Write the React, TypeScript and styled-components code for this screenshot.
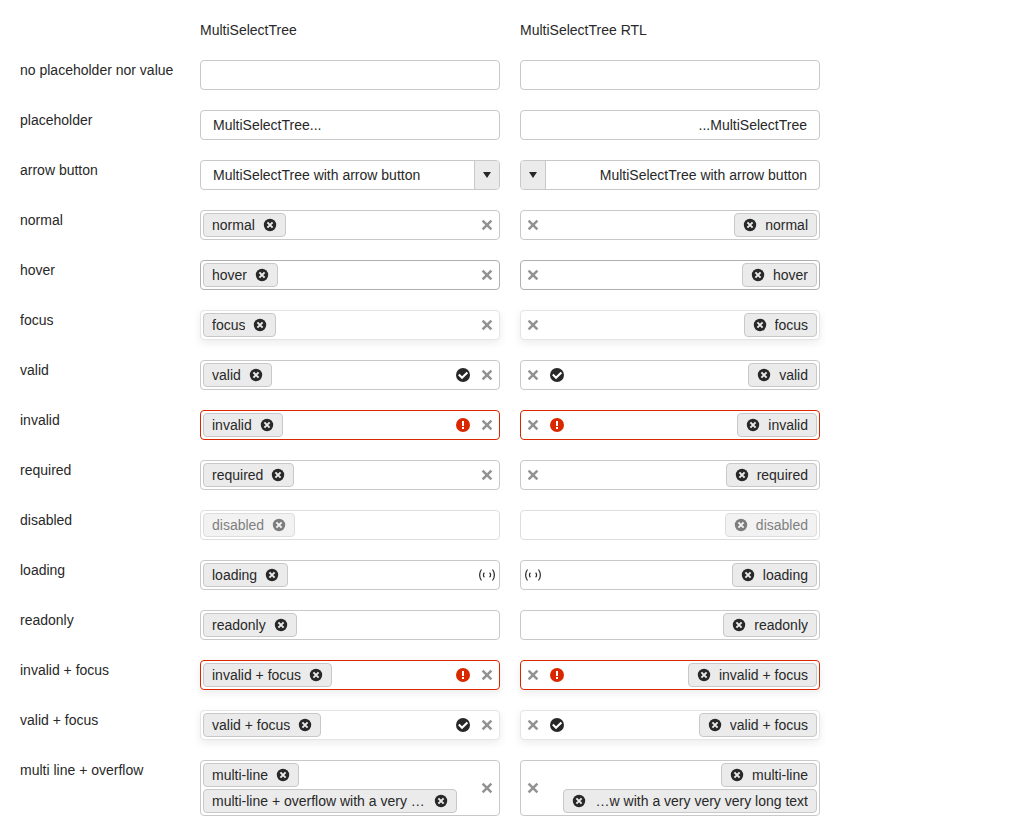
import React from "react";
import styled, { createGlobalStyle, css } from "styled-components";

const GlobalStyle = createGlobalStyle`
  *, *::before, *::after { box-sizing: border-box; }
  body {
    margin: 0;
    background: #fff;
    color: #282828;
    font-family: "Liberation Sans", Arial, Helvetica, sans-serif;
    font-size: 14px;
    line-height: 20px;
  }
  button, input { font: inherit; color: inherit; }
`;

const Page = styled.main`
  display: grid;
  grid-template-columns: 160px repeat(2, minmax(0, 300px));
  gap: 20px;
  padding: 20px;
`;

const ColumnTitle = styled.div`
  grid-column: ${(p: { $column: number }) => p.$column};
`;

const RowLabel = styled.div`
  white-space: nowrap;
`;

type Tone = "normal" | "hover" | "focus" | "invalid" | "invalidFocus";

const borderColors: Record<Tone, string> = {
  normal: "#c8c8c8",
  hover: "#afafaf",
  focus: "#e5e5e5",
  invalid: "#d92800",
  invalidFocus: "#d92800",
};

const Field = styled.div<{ $tone: Tone; $disabled?: boolean }>`
  display: flex;
  min-height: 30px;
  border: 1px solid ${(p) => borderColors[p.$tone]};
  border-radius: 4px;
  background: #fff;
  overflow: hidden;
  ${(p) =>
    (p.$tone === "focus" || p.$tone === "invalidFocus") &&
    css`
      box-shadow: 0 3px 8px rgba(0, 0, 0, 0.08);
    `}
  ${(p) =>
    p.$disabled &&
    css`
      opacity: 0.6;
    `}
`;

const TextInput = styled.input`
  flex: 1;
  min-width: 0;
  padding: 0 12px;
  border: 0;
  outline: 0;
  background: transparent;

  &::placeholder {
    color: inherit;
    opacity: 1;
  }
`;

const ArrowButton = styled.button`
  display: flex;
  align-items: center;
  justify-content: center;
  width: 25px;
  padding: 0;
  border: 0;
  border-inline-start: 1px solid #c8c8c8;
  background: #ebebeb;
`;

const ChipList = styled.ul`
  display: flex;
  flex: 1;
  flex-wrap: wrap;
  gap: 2px;
  min-width: 0;
  margin: 0;
  padding: 2px;
  padding-inline-end: 18px;
  list-style: none;
`;

const Chip = styled.li`
  display: flex;
  align-items: center;
  gap: 8px;
  max-width: 100%;
  height: 24px;
  padding: 0 8px;
  border: 1px solid #c8c8c8;
  border-radius: 4px;
  background: #ebebeb;
`;

const ChipText = styled.span`
  overflow: hidden;
  text-overflow: ellipsis;
  white-space: nowrap;
`;

const ChipRemove = styled.button`
  display: flex;
  flex: none;
  padding: 0;
  border: 0;
  background: transparent;
`;

const Slot = styled.span`
  display: flex;
  flex: none;
  align-items: center;
  justify-content: center;
  width: 24px;
`;

const ClearButton = styled.button`
  display: flex;
  flex: none;
  align-items: center;
  justify-content: center;
  width: 24px;
  padding: 0;
  border: 0;
  background: transparent;
  opacity: 0.5;
`;

const Icon = styled.svg.attrs({ "aria-hidden": true })`
  display: block;
  flex: none;
`;

const RemoveIcon = () => (
  <Icon width="14" height="14" viewBox="0 0 14 14">
    <circle cx="7" cy="7" r="6.2" fill="#282828" />
    <path d="M4.4 4.4l5.2 5.2M9.6 4.4L4.4 9.6" stroke="#ebebeb" strokeWidth="2" />
  </Icon>
);

const ClearIcon = () => (
  <Icon width="12" height="12" viewBox="0 0 12 12">
    <path d="M1.6 1.6l8.8 8.8M10.4 1.6L1.6 10.4" stroke="#282828" strokeWidth="2.5" />
  </Icon>
);

const ValidIcon = () => (
  <Icon width="14" height="14" viewBox="0 0 14 14">
    <circle cx="7" cy="7" r="7" fill="#282828" />
    <path d="M2.8 6.6l3.2 3.2L11.4 4.4" fill="none" stroke="#fff" strokeWidth="2.1" />
  </Icon>
);

const InvalidIcon = () => (
  <Icon width="14" height="14" viewBox="0 0 14 14">
    <circle cx="7" cy="7" r="7" fill="#d92800" />
    <path d="M6 3h2v5H6zM6 9h2v2H6z" fill="#fff" />
  </Icon>
);

const LoadingIcon = () => (
  <Icon width="18" height="14" viewBox="0 0 18 14" fill="none" stroke="#282828" strokeWidth="1.2">
    <path d="M3.5 1.5C1 4.7 1 9.3 3.5 12.5M14.5 1.5c2.5 3.2 2.5 7.8 0 11" />
    <path d="M6.4 4.8c-1.3 1.2-1.3 3.2 0 4.4M11.6 4.8c1.3 1.2 1.3 3.2 0 4.4" />
  </Icon>
);

const ArrowIcon = () => (
  <Icon width="8" height="6" viewBox="0 0 8 6">
    <path d="M0 0h8L4 6z" fill="#282828" />
  </Icon>
);

type RowData = {
  label: string;
  chips?: string[];
  placeholder?: string;
  arrow?: boolean;
  tone?: Tone;
  status?: "valid" | "invalid" | "loading";
  clear?: boolean;
  disabled?: boolean;
};

const rows: RowData[] = [
  { label: "no placeholder nor value" },
  { label: "placeholder", placeholder: "MultiSelectTree..." },
  { label: "arrow button", placeholder: "MultiSelectTree with arrow button", arrow: true },
  { label: "normal", chips: ["normal"], clear: true },
  { label: "hover", chips: ["hover"], tone: "hover", clear: true },
  { label: "focus", chips: ["focus"], tone: "focus", clear: true },
  { label: "valid", chips: ["valid"], status: "valid", clear: true },
  { label: "invalid", chips: ["invalid"], tone: "invalid", status: "invalid", clear: true },
  { label: "required", chips: ["required"], clear: true },
  { label: "disabled", chips: ["disabled"], disabled: true },
  { label: "loading", chips: ["loading"], status: "loading" },
  { label: "readonly", chips: ["readonly"] },
  { label: "invalid + focus", chips: ["invalid + focus"], tone: "invalidFocus", status: "invalid", clear: true },
  { label: "valid + focus", chips: ["valid + focus"], tone: "focus", status: "valid", clear: true },
  {
    label: "multi line + overflow",
    chips: ["multi-line", "multi-line + overflow with a very very very long text"],
    clear: true,
  },
];

const statusIcons = {
  valid: <ValidIcon />,
  invalid: <InvalidIcon />,
  loading: <LoadingIcon />,
};

function MultiSelectTree({ row, dir, labelId }: { row: RowData; dir: "ltr" | "rtl"; labelId: string }) {
  return (
    <Field dir={dir} role="group" aria-labelledby={labelId} $tone={row.tone ?? "normal"} $disabled={row.disabled}>
      {row.chips ? (
        <ChipList>
          {row.chips.map((chip) => (
            <Chip key={chip}>
              <ChipText>{chip}</ChipText>
              <ChipRemove type="button" aria-label={`Remove ${chip}`} disabled={row.disabled}>
                <RemoveIcon />
              </ChipRemove>
            </Chip>
          ))}
        </ChipList>
      ) : (
        <TextInput type="text" aria-labelledby={labelId} placeholder={row.placeholder} />
      )}
      {row.status && <Slot>{statusIcons[row.status]}</Slot>}
      {row.clear && (
        <ClearButton type="button" aria-label="Clear">
          <ClearIcon />
        </ClearButton>
      )}
      {row.arrow && (
        <ArrowButton type="button" aria-label="Open">
          <ArrowIcon />
        </ArrowButton>
      )}
    </Field>
  );
}

export default function App() {
  return (
    <>
      <GlobalStyle />
      <Page>
        <ColumnTitle $column={2}>MultiSelectTree</ColumnTitle>
        <ColumnTitle $column={3}>MultiSelectTree RTL</ColumnTitle>
        {rows.map((row, index) => {
          const labelId = `row-${index}`;
          return (
            <React.Fragment key={row.label}>
              <RowLabel id={labelId}>{row.label}</RowLabel>
              <MultiSelectTree row={row} dir="ltr" labelId={labelId} />
              <MultiSelectTree row={row} dir="rtl" labelId={labelId} />
            </React.Fragment>
          );
        })}
      </Page>
    </>
  );
}
